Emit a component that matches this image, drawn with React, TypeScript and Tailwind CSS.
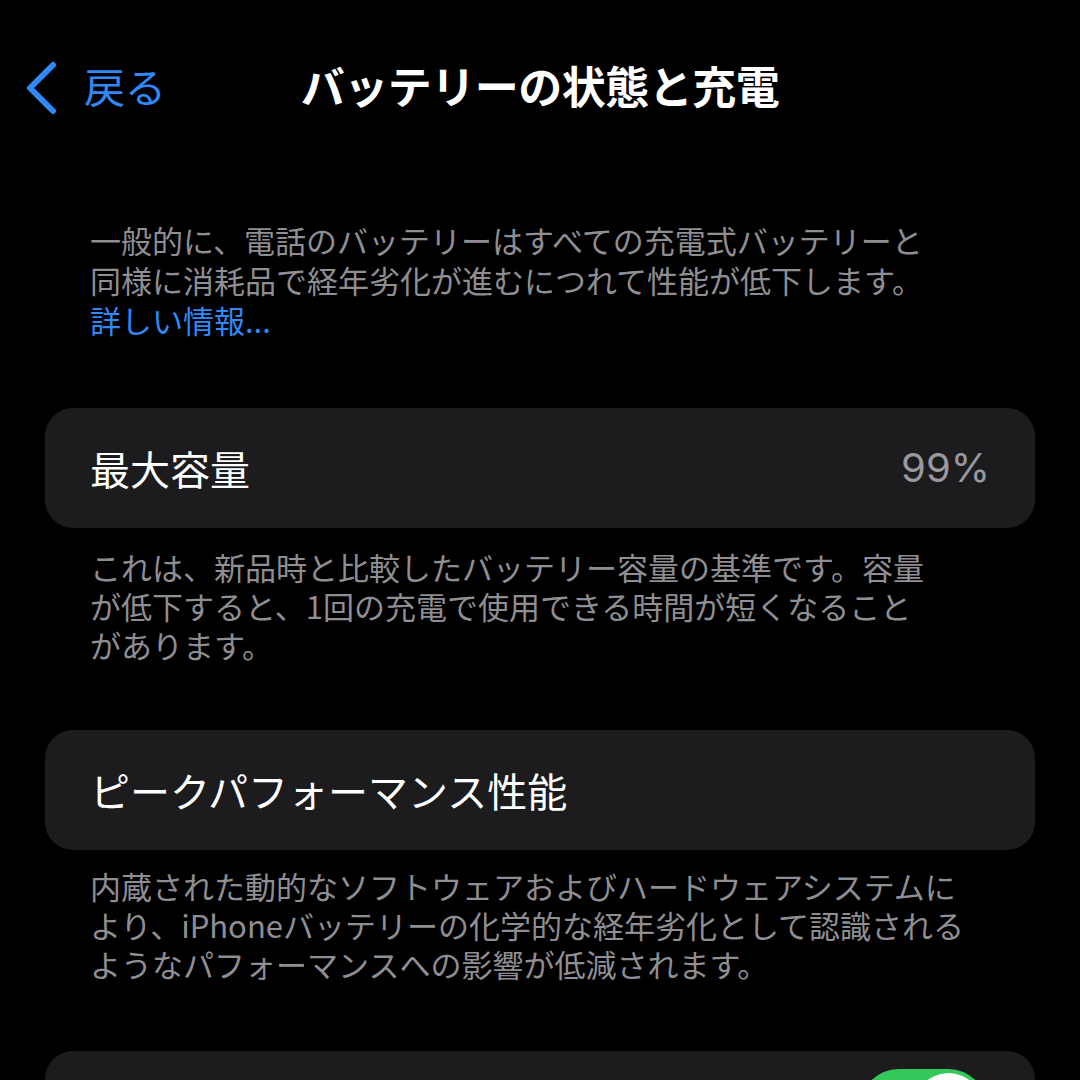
export default function App() {
  const jp = { fontFamily: '"Noto Sans CJK JP", "Noto Sans", sans-serif' }

  return (
    <div className="h-[1080px] w-[1080px] overflow-hidden bg-black text-white" style={jp}>
      {/* Nav bar */}
      <div className="relative mt-[46px] flex h-[78px] items-center justify-center">
        <div className="absolute left-[24px] top-0 flex h-full items-center gap-[26px] text-[#2f89f6]">
          <svg width="34" height="54" viewBox="0 0 34 54" fill="none" className="mt-[6px]">
            <path d="M29 4 L6 27 L29 50" stroke="currentColor" strokeWidth="6" strokeLinecap="round" strokeLinejoin="round" />
          </svg>
          <span className="text-[41px] leading-none">戻る</span>
        </div>
        <h1 className="text-[44px] font-semibold leading-none tracking-[-0.5px]">バッテリーの状態と充電</h1>
      </div>

      <div className="px-[45px]">
        <p className="mt-[96px] whitespace-nowrap px-[45px] text-[31px] leading-[40px] text-[#8e8e93]">
          一般的に、電話のバッテリーはすべての充電式バッテリーと
          <br />
          同様に消耗品で経年劣化が進むにつれて性能が低下します。
          <br />
          <span className="text-[#2f89f6]">詳しい情報...</span>
        </p>

        <div className="mt-[68px] flex h-[120px] items-center justify-between rounded-[28px] bg-[#1c1c1e] px-[45px]">
          <span className="text-[40px] leading-none">最大容量</span>
          <span className="text-[40px] leading-none text-[#98989f]" style={{ fontFamily: 'Inter, "Noto Sans", sans-serif' }}>
            99%
          </span>
        </div>

        <p className="mt-[19px] whitespace-nowrap px-[45px] text-[31px] leading-[39px] text-[#8e8e93]">
          これは、新品時と比較したバッテリー容量の基準です。容量
          <br />
          が低下すると、1回の充電で使用できる時間が短くなること
          <br />
          があります。
        </p>

        <div className="mt-[66px] flex h-[120px] items-center rounded-[28px] bg-[#1c1c1e] px-[45px]">
          <span className="text-[40px] leading-none">ピークパフォーマンス性能</span>
        </div>

        <p className="mt-[16px] whitespace-nowrap px-[45px] text-[31px] leading-[39px] text-[#8e8e93]">
          内蔵された動的なソフトウェアおよびハードウェアシステムに
          <br />
          より、iPhoneバッテリーの化学的な経年劣化として認識される
          <br />
          ようなパフォーマンスへの影響が低減されます。
        </p>

        <div className="mt-[68px] flex h-[120px] items-start justify-end rounded-[28px] bg-[#1c1c1e] pr-[48px] pt-[18px]">
          <div className="flex h-[77px] w-[127px] items-center justify-end rounded-full bg-[#34c759] p-[4px]">
            <div className="h-[69px] w-[69px] rounded-full bg-white" />
          </div>
        </div>
      </div>
    </div>
  )
}
